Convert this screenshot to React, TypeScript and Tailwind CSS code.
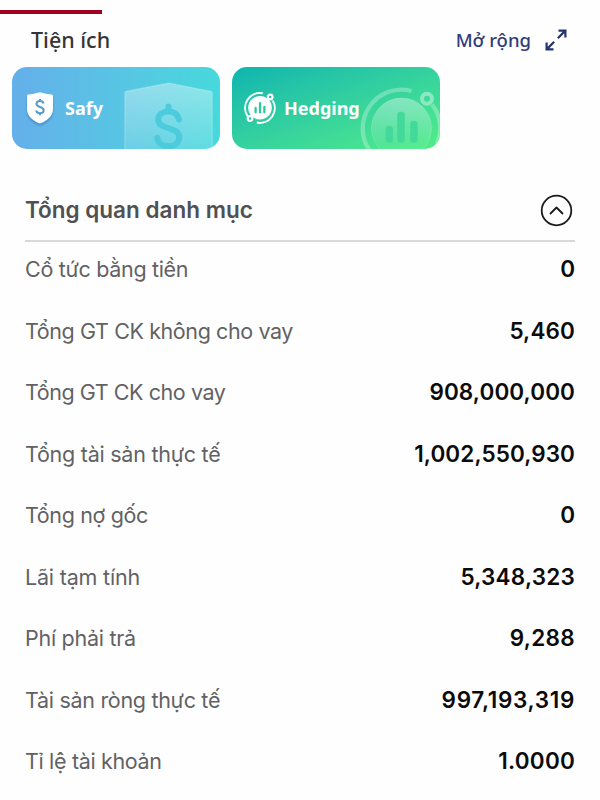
import React from "react";

type Row = { label: string; value: string; labelSpacing: string; valueSpacing: string };

const rows: Row[] = [
  { label: "Cổ tức bằng tiền", value: "0", labelSpacing: "tracking-[-0.31px]", valueSpacing: "tracking-[0px]" },
  { label: "Tổng GT CK không cho vay", value: "5,460", labelSpacing: "tracking-[-0.4px]", valueSpacing: "tracking-[0.12px]" },
  { label: "Tổng GT CK cho vay", value: "908,000,000", labelSpacing: "tracking-[-0.44px]", valueSpacing: "tracking-[0.08px]" },
  { label: "Tổng tài sản thực tế", value: "1,002,550,930", labelSpacing: "tracking-[-0.25px]", valueSpacing: "tracking-[0.08px]" },
  { label: "Tổng nợ gốc", value: "0", labelSpacing: "tracking-[-0.37px]", valueSpacing: "tracking-[0px]" },
  { label: "Lãi tạm tính", value: "5,348,323", labelSpacing: "tracking-[-0.19px]", valueSpacing: "tracking-[0.2px]" },
  { label: "Phí phải trả", value: "9,288", labelSpacing: "tracking-[-0.28px]", valueSpacing: "tracking-[0.3px]" },
  { label: "Tài sản ròng thực tế", value: "997,193,319", labelSpacing: "tracking-[-0.3px]", valueSpacing: "tracking-[0.65px]" },
  { label: "Tỉ lệ tài khoản", value: "1.0000", labelSpacing: "tracking-[-0.34px]", valueSpacing: "tracking-[0.2px]" },
];

function ExpandIcon() {
  return (
    <svg width="22" height="22" viewBox="0 0 22 22" fill="none" stroke="#27356f" strokeWidth="2.200">
      <path d="M13.500 1.600H20.400V8.500M20.100 1.900L12.800 9.200M1.600 13.500V20.400H8.500M1.900 20.100L9.200 12.800" />
    </svg>
  );
}

function ShieldIcon() {
  return (
    <svg className="drop-shadow-[0_2px_1px_rgba(50,110,170,0.55)]" width="26" height="32" viewBox="0 0 26 32">
      <path d="M13 .2C17 1.500 21.500 2.200 24.800 2.500Q26 2.600 26 4V17C26 24 20.500 28.800 13 31.500 5.500 28.800 0 24 0 17V4Q0 2.600 1.200 2.500C4.500 2.200 9 1.500 13 .2Z" fill="#fff" />
      <path
        d="M16.600 11.400C16.200 9.900 14.800 9.100 13 9.100c-2.100 0-3.500 1.100-3.500 2.900 0 3.900 7.200 2.200 7.200 6.200 0 1.800-1.500 3-3.700 3-2 0-3.500-1-3.800-2.700M13 7v2.100M13 21.200v2.100"
        fill="none"
        stroke="#579cca"
        strokeWidth="2"
      />
    </svg>
  );
}

function ShieldBackdrop() {
  return (
    <svg className="absolute right-[7px] bottom-0" width="89" height="67" viewBox="0 0 89 67">
      <defs>
        <linearGradient id="shield" x1="0" y1="0" x2="0" y2="1">
          <stop offset="0" stopColor="#fff" stopOpacity=".38" />
          <stop offset="1" stopColor="#fff" stopOpacity=".12" />
        </linearGradient>
      </defs>
      <path d="M.8 70V11Q.8 9.500 2.400 9.200L44.500 1 86.600 9.200Q88.200 9.500 88.200 11V70Z" fill="url(#shield)" stroke="#fff" strokeOpacity=".18" strokeWidth="1.500" />
      <path
        d="M55 37.500C53.800 32.500 50 29.500 44.500 29.500c-6 0-10.300 3-10.300 8 0 11 21 6.500 21 17.700 0 5.500-4.300 9-10.700 9-6 0-10.300-3-11.300-8.500M44.500 24.500v4"
        fill="none"
        stroke="#4ccbdd"
        strokeWidth="6"
        strokeLinecap="round"
      />
    </svg>
  );
}

function OrbitIcon() {
  return (
    <svg width="32" height="32" viewBox="0 0 32 32" fill="none">
      <circle cx="16" cy="15.700" r="11.800" fill="#fff" />
      <path d="M18.800 1.300A14.900 14.900 0 0 0 3.400 23.900M28.700 8.400A14.900 14.900 0 0 1 12.800 30.600" stroke="#fff" strokeWidth="2" />
      <path d="M11.600 16v4.300M16 11.200v9.100M20.400 15v5.300" stroke="#2dc99f" strokeWidth="2.300" strokeLinecap="round" />
      <circle cx="26.200" cy="5" r="2.300" fill="#23c1a2" stroke="#fff" strokeWidth="2.200" />
      <circle cx="6" cy="26.500" r="2.300" fill="#23c1a2" stroke="#fff" strokeWidth="2.200" />
    </svg>
  );
}

function OrbitBackdrop() {
  return (
    <svg className="absolute right-0 bottom-0" width="80" height="62" viewBox="0 0 80 62" fill="none">
      <defs>
        <linearGradient id="disc" x1="0" y1="0" x2="0" y2="1">
          <stop offset="0" stopColor="#fff" stopOpacity=".38" />
          <stop offset=".75" stopColor="#fff" stopOpacity=".06" />
        </linearGradient>
      </defs>
      <circle cx="41.500" cy="41" r="30" fill="url(#disc)" stroke="#fff" strokeOpacity=".16" />
      <path d="M51.500 4A38.800 38.800 0 0 0 9.900 64M72 17.500A38.800 38.800 0 0 1 77 57" stroke="#fff" strokeOpacity=".28" strokeWidth="4.300" />
      <circle cx="67" cy="11.700" r="5" stroke="#fff" strokeOpacity=".4" strokeWidth="4" />
      <path d="M29.300 42.500v9.500M41 28.500v23.500M54 37.500v14.500" stroke="#42d99a" strokeWidth="7.500" strokeLinecap="round" />
    </svg>
  );
}

export default function App() {
  return (
    <main className="h-[800px] w-[600px] overflow-hidden bg-[#fefefe]">
      <div className="pt-[10px]">
        <div className="h-[4px] w-[102px] bg-[#a00020]" />
      </div>

      <header className="flex h-[53px] items-center justify-between pr-[33px] pl-[31px] font-['Noto_Sans',sans-serif]">
        <h1 className="text-[21.500px] font-medium text-[#353538]">Tiện ích</h1>
        <button className="flex items-center gap-[14px] pb-[1px] text-[18.500px] font-medium text-[#303c7c]">
          Mở rộng
          <ExpandIcon />
        </button>
      </header>

      <section className="flex gap-[12px] pl-[12px] font-['Noto_Sans',sans-serif] text-[18px] font-bold text-white">
        <div className="relative flex h-[82px] w-[208px] items-center gap-[12px] overflow-hidden rounded-[15px] bg-linear-to-r from-[#64afea] to-[#46d9dc] pl-[15px]">
          <ShieldBackdrop />
          <ShieldIcon />
          <span>Safy</span>
        </div>
        <div className="relative flex h-[82px] w-[208px] items-center gap-[8px] overflow-hidden rounded-[15px] bg-linear-to-br from-[#0bb5af] to-[#52ed87] pl-[12px]">
          <OrbitBackdrop />
          <OrbitIcon />
          <span>Hedging</span>
        </div>
      </section>

      <section className="px-[25px] pt-[31px] font-['Inter',sans-serif]">
        <div className="flex h-[62px] items-center justify-between border-b-2 border-[#d9d9d9] pr-[2px]">
          <h2 className="text-[22.500px] font-semibold text-[#505052]">Tổng quan danh mục</h2>
          <svg width="33" height="33" viewBox="0 0 33 33" fill="none" stroke="#1c1c1c" strokeWidth="1.800" strokeLinecap="round" strokeLinejoin="round">
            <circle cx="16.500" cy="16.500" r="14.800" />
            <path d="M10.500 19.500 16.500 13.500 22.500 19.500" />
          </svg>
        </div>
        <div className="-mt-[3.5px]">
          {rows.map((row) => (
            <div key={row.label} className="flex h-[61.5px] items-center justify-between">
              <span className={`text-[21.5px] text-[#626264] ${row.labelSpacing}`}>{row.label}</span>
              <span className={`text-[22.5px] font-semibold text-[#0b0b0b] ${row.valueSpacing}`}>{row.value}</span>
            </div>
          ))}
        </div>
      </section>
    </main>
  );
}
